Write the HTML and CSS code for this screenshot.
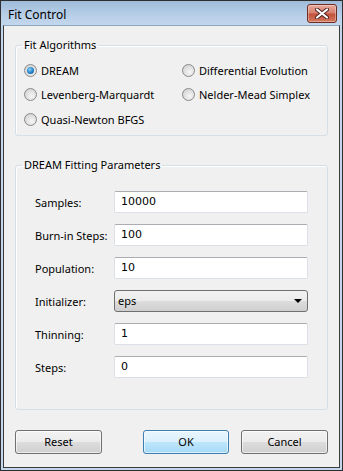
FILE: index.html
```html
<!DOCTYPE html>
<html>
<head>
<meta charset="utf-8">
<title>Fit Control</title>
<link rel="stylesheet" href="styles.css">
</head>
<body>
<div class="window">
	<div class="titlebar">
		<span class="title">Fit Control</span>
		<span class="close-btn">
			<svg width="14" height="11" viewBox="0 0 14 11">
				<path d="M2 1.5 L12 9.5 M12 1.5 L2 9.5" stroke="#4a2020" stroke-width="4" stroke-linecap="round"/>
				<path d="M2 1.5 L12 9.5 M12 1.5 L2 9.5" stroke="#ffffff" stroke-width="2.2" stroke-linecap="round"/>
			</svg>
		</span>
	</div>
	<div class="frame">
		<div class="client">
			<fieldset class="group algos">
				<legend>Fit Algorithms</legend>
				<div class="radio-grid">
					<label class="radio-item"><span class="radio checked"></span>DREAM</label>
					<label class="radio-item"><span class="radio"></span>Differential Evolution</label>
					<label class="radio-item"><span class="radio"></span>Levenberg-Marquardt</label>
					<label class="radio-item"><span class="radio"></span>Nelder-Mead Simplex</label>
					<label class="radio-item"><span class="radio"></span>Quasi-Newton BFGS</label>
				</div>
			</fieldset>
			<fieldset class="group params">
				<legend>DREAM Fitting Parameters</legend>
				<div class="form-grid">
					<span class="field-label">Samples:</span>
					<span class="field">10000</span>
					<span class="field-label">Burn-in Steps:</span>
					<span class="field">100</span>
					<span class="field-label">Population:</span>
					<span class="field">10</span>
					<span class="field-label">Initializer:</span>
					<span class="combo">eps<span class="arrow"></span></span>
					<span class="field-label">Thinning:</span>
					<span class="field">1</span>
					<span class="field-label">Steps:</span>
					<span class="field">0</span>
				</div>
			</fieldset>
			<div class="buttons">
				<span class="btn">Reset</span>
				<span class="btn default">OK</span>
				<span class="btn cancel">Cancel</span>
			</div>
		</div>
	</div>
</div>
</body>
</html>
```
FILE: styles.css
```css
body {
	margin: 0;
	font-family: "Noto Sans", "Open Sans", sans-serif;
	font-size: 11px;
	color: #000000;
}
.window {
	width: 343px;
	height: 471px;
	box-sizing: border-box;
	border: 1px solid #2e2e2e;
	background: #c3d7ec;
	display: flex;
	flex-direction: column;
}
.titlebar {
	height: 24px;
	display: flex;
	justify-content: space-between;
	align-items: flex-start;
	background: linear-gradient(#9fbbd9, #b8cfe8 60%, #c3d7ec);
}
.title {
	padding: 6px 0 0 7px;
	line-height: 16px;
	font-size: 12px;
}
.close-btn {
	width: 28px;
	height: 17px;
	margin: 3px 5px 0 0;
	border: 1px solid #6e2b22;
	border-radius: 3px;
	background: linear-gradient(#e9a99b, #d7806f 45%, #c2513c 55%, #d57a5e);
	box-shadow: inset 0 0 0 1px rgba(255, 255, 255, 0.35);
	display: flex;
	align-items: center;
	justify-content: center;
}
.frame {
	flex: 1;
	padding: 0 2px 2px;
	display: flex;
}
.client {
	flex: 1;
	border: 1px solid #3a3a3a;
	border-top-color: #8ea6c0;
	background: #f0f0f0;
}
.group {
	margin: 11px 11px 0;
	padding: 0;
	border: 1px solid #d5dfe5;
	border-radius: 3px;
	box-shadow: inset 1px 1px 0 #ffffff;
}
.group legend {
	margin-left: 6px;
	padding: 0 2px;
	line-height: 16px;
}
.params {
	margin-top: 21px;
}
.radio-grid {
	display: grid;
	grid-template-columns: 158px 1fr;
	grid-template-rows: 24px 25px 24px;
	padding: 5px 0 4px 8px;
}
.radio-item {
	display: flex;
	align-items: center;
	gap: 4px;
	white-space: nowrap;
}
.radio {
	width: 11px;
	height: 11px;
	border: 1px solid #8a8a8a;
	border-radius: 50%;
	background: radial-gradient(circle at 60% 65%, #f6f6f6 0, #dcdcdc 60%, #c8c8c8 100%);
	display: flex;
	align-items: center;
	justify-content: center;
}
.radio.checked::after {
	content: "";
	width: 7px;
	height: 7px;
	border-radius: 50%;
	background: radial-gradient(circle at 40% 35%, #8fd2f8 0, #2f8dd0 45%, #0d4f8f 100%);
}
.form-grid {
	display: grid;
	grid-template-columns: 79px 1fr;
	grid-auto-rows: 22px;
	row-gap: 11px;
	padding: 18px 19px 31px;
	align-items: center;
}
.field-label {
	white-space: nowrap;
}
.field {
	height: 22px;
	box-sizing: border-box;
	border: 1px solid #dbdfe6;
	border-top-color: #abadb3;
	border-radius: 2px;
	background: #ffffff;
	padding-left: 6px;
	font-family: "DejaVu Sans", sans-serif;
	font-size: 11px;
	line-height: 20px;
}
.combo {
	height: 22px;
	box-sizing: border-box;
	border: 1px solid #707070;
	border-radius: 3px;
	background: linear-gradient(#f2f2f2, #ebebeb 50%, #dddddd 50%, #cfcfcf);
	padding-left: 3px;
	line-height: 20px;
	display: flex;
	justify-content: space-between;
	align-items: center;
}
.arrow {
	width: 0;
	height: 0;
	margin-right: 5px;
	border-left: 4px solid transparent;
	border-right: 4px solid transparent;
	border-top: 4px solid #000000;
}
.buttons {
	display: flex;
	padding: 0 11px;
	margin-top: 20px;
}
.btn {
	width: 87px;
	height: 24px;
	box-sizing: border-box;
	border: 1px solid #707070;
	border-radius: 3px;
	background: linear-gradient(#f2f2f2, #ebebeb 50%, #dddddd 50%, #cfcfcf);
	box-shadow: inset 0 0 0 1px rgba(255, 255, 255, 0.6);
	text-align: center;
	line-height: 22px;
}
.btn.default {
	width: 86px;
	margin-left: auto;
	border-color: #3c7fb1;
	background: linear-gradient(#eaf6fd, #d9f0fc 50%, #bee6fd 50%, #a7d9f5);
}
.btn.cancel {
	margin-left: 12px;
}
```
